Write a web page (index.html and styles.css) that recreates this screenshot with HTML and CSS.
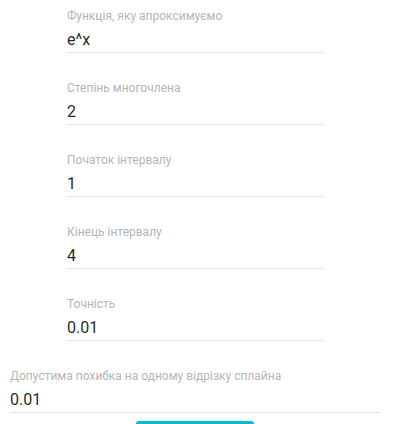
FILE: index.html
```html
<!DOCTYPE html>
<html lang="uk">
<head>
<meta charset="utf-8">
<title>Апроксимація</title>
<link rel="stylesheet" href="styles.css">
</head>
<body>
<div class="form">
  <div class="field narrow">
    <label class="label">Функція, яку апроксимуємо</label>
    <div class="value">e^x</div>
  </div>
  <div class="field narrow">
    <label class="label">Степінь многочлена</label>
    <div class="value">2</div>
  </div>
  <div class="field narrow">
    <label class="label">Початок інтервалу</label>
    <div class="value">1</div>
  </div>
  <div class="field narrow">
    <label class="label">Кінець інтервалу</label>
    <div class="value">4</div>
  </div>
  <div class="field narrow">
    <label class="label">Точність</label>
    <div class="value">0.01</div>
  </div>
  <div class="field wide">
    <label class="label">Допустима похибка на одному відрізку сплайна</label>
    <div class="value">0.01</div>
  </div>
  <div class="actions">
    <button class="btn">Обчислити</button>
  </div>
</div>
</body>
</html>
```
FILE: styles.css
```css
html, body {
  margin: 0;
  padding: 0;
  background: #fff;
}
body {
  font-family: Roboto, "Noto Sans", sans-serif;
  overflow: hidden;
}
.form {
  padding-top: 8px;
  display: flex;
  flex-direction: column;
  gap: 27px;
}
.field {
  display: flex;
  flex-direction: column;
  border-bottom: 1px solid #e0e0e0;
  padding-bottom: 2px;
}
.narrow {
  margin-left: 67px;
  width: 256px;
}
.wide {
  margin-left: 10px;
  width: 370px;
}
.label {
  font-size: 12px;
  line-height: 16px;
  color: #b5b5b5;
}
.value {
  margin-top: 6px;
  font-size: 16px;
  line-height: 20px;
  color: rgba(0, 0, 0, 0.87);
}
.actions {
  display: flex;
  justify-content: flex-start;
  margin-top: -19px;
  padding-left: 136px;
}
.btn {
  width: 118px;
  height: 36px;
  border: none;
  border-radius: 3px;
  background: #00bcd4;
  color: #fff;
  font-family: Roboto, sans-serif;
  font-size: 14px;
  text-transform: uppercase;
}
```
